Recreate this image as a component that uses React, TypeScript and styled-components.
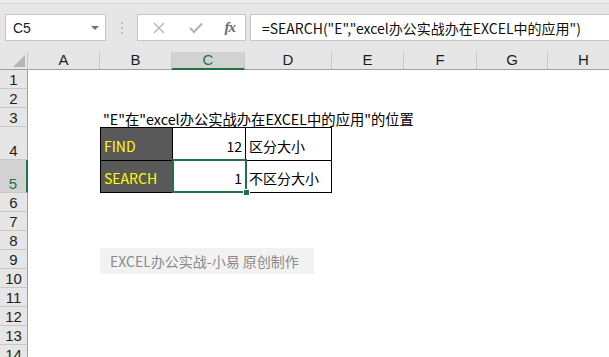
import React from 'react';
import styled, { createGlobalStyle, css } from 'styled-components';

const GlobalStyle = createGlobalStyle`
  html, body {
    margin: 0;
    padding: 0;
    background: #ffffff;
  }
  body {
    font-family: "Noto Sans CJK SC", "Noto Sans", sans-serif;
  }
`;

const COLS = [
  { name: 'A', width: 72 },
  { name: 'B', width: 72 },
  { name: 'C', width: 73 },
  { name: 'D', width: 87 },
  { name: 'E', width: 72 },
  { name: 'F', width: 73 },
  { name: 'G', width: 71 },
  { name: 'H', width: 72 },
];

const ROW_HEIGHTS = [19, 19, 19, 33, 33, 19, 19, 19, 19, 19, 19, 19, 19, 19];

type CellData = {
  text: string;
  align?: 'left' | 'right';
  fill?: boolean;
  boxed?: boolean;
  selected?: boolean;
  overflow?: boolean;
};

// row number -> column index (0 = A) -> cell
const CELLS: Record<number, Record<number, CellData>> = {
  3: {
    1: { text: '"E"在"excel办公实战办在EXCEL中的应用"的位置', overflow: true },
  },
  4: {
    1: { text: 'FIND', fill: true, boxed: true },
    2: { text: '12', align: 'right', boxed: true },
    3: { text: '区分大小', boxed: true },
  },
  5: {
    1: { text: 'SEARCH', fill: true, boxed: true },
    2: { text: '1', align: 'right', boxed: true, selected: true },
    3: { text: '不区分大小', boxed: true },
  },
};

const SELECTED_COL = 2;
const SELECTED_ROW = 5;

export default function App() {
  return (
    <>
      <GlobalStyle />
      <Window>
        <TopStrip />
        <FormulaBar>
          <NameBox>
            <span>C5</span>
            <DropArrow />
          </NameBox>
          <Grip>
            <i />
            <i />
            <i />
          </Grip>
          <FuncButtons>
            <FuncIcon>
              <svg width="12" height="12" viewBox="0 0 12 12">
                <path d="M1 1 L11 11 M11 1 L1 11" stroke="#b3b3b3" strokeWidth="1.3" fill="none" />
              </svg>
            </FuncIcon>
            <FuncIcon>
              <svg width="14" height="12" viewBox="0 0 14 12">
                <path d="M1 6 L5 10 L13 1.5" stroke="#b3b3b3" strokeWidth="2" fill="none" />
              </svg>
            </FuncIcon>
            <FxLabel>fx</FxLabel>
          </FuncButtons>
          <FormulaInput>=SEARCH("E","excel办公实战办在EXCEL中的应用")</FormulaInput>
        </FormulaBar>

        <Sheet>
          <CornerCell>
            <svg width="12" height="12" viewBox="0 0 12 12">
              <polygon points="12,0 12,12 0,12" fill="#b5b5b5" />
            </svg>
          </CornerCell>
          {COLS.map((c, i) => (
            <ColHeader key={c.name} $active={i === SELECTED_COL}>
              {c.name}
            </ColHeader>
          ))}

          {ROW_HEIGHTS.map((h, r) => {
            const rowNo = r + 1;
            const rowCells = CELLS[rowNo] || {};
            return (
              <React.Fragment key={rowNo}>
                <RowHeader $active={rowNo === SELECTED_ROW}>{rowNo}</RowHeader>
                {COLS.map((c, ci) => {
                  const cell = rowCells[ci];
                  if (!cell) return <Cell key={c.name} />;
                  const lastCol = !rowCells[ci + 1]?.boxed;
                  const lastRow = !CELLS[rowNo + 1]?.[ci]?.boxed;
                  return (
                    <Cell
                      key={c.name}
                      $align={cell.align || 'left'}
                      $fill={cell.fill}
                      $boxed={cell.boxed}
                      $lastCol={lastCol}
                      $lastRow={lastRow}
                      $selected={cell.selected}
                      $overflow={cell.overflow}
                    >
                      {cell.text}
                    </Cell>
                  );
                })}
              </React.Fragment>
            );
          })}

          <Watermark>EXCEL办公实战-小易 原创制作</Watermark>
        </Sheet>
      </Window>
    </>
  );
}

const Window = styled.div`
  width: 609px;
  height: 357px;
  overflow: hidden;
  background: #ffffff;
`;

const TopStrip = styled.div`
  height: 3px;
  background: #ececec;
  border-bottom: 1px solid #d6d6d6;
`;

const FormulaBar = styled.div`
  display: flex;
  align-items: center;
  height: 48px;
  box-sizing: border-box;
  padding: 10px 0 11px 5px;
  background: #e6e6e6;
`;

const boxBase = css`
  height: 27px;
  box-sizing: border-box;
  background: #ffffff;
  border: 1px solid #c6c6c6;
  display: flex;
  align-items: center;
`;

const NameBox = styled.div`
  ${boxBase};
  width: 101px;
  padding: 0 6px 0 7px;
  justify-content: space-between;
  font-family: "Liberation Sans", Arial, sans-serif;
  font-size: 14px;
  color: #222222;
`;

const DropArrow = styled.span`
  width: 0;
  height: 0;
  border-left: 4px solid transparent;
  border-right: 4px solid transparent;
  border-top: 4px solid #707070;
  margin-top: 1px;
`;

const Grip = styled.div`
  width: 31px;
  display: flex;
  flex-direction: column;
  align-items: center;
  gap: 3px;

  i {
    display: block;
    width: 2px;
    height: 2px;
    background: #bdbdbd;
  }
`;

const FuncButtons = styled.div`
  ${boxBase};
  width: 109px;
  padding: 0 10px 0 13px;
  justify-content: space-between;
`;

const FuncIcon = styled.span`
  display: flex;
  align-items: center;
  width: 16px;
  justify-content: center;
`;

const FxLabel = styled.span`
  font-family: "Liberation Serif", "Times New Roman", serif;
  font-style: italic;
  font-weight: bold;
  font-size: 15px;
  color: #6a6a6a;
  letter-spacing: -1px;
`;

const FormulaInput = styled.div`
  ${boxBase};
  flex: 1;
  margin-left: 4px;
  margin-right: -2px;
  padding-left: 11px;
  font-size: 14px;
  color: #111111;
  white-space: nowrap;
`;

const Sheet = styled.div`
  position: relative;
  display: grid;
  grid-template-columns: 28px ${COLS.map((c) => `${c.width}px`).join(' ')};
  grid-template-rows: 18px ${ROW_HEIGHTS.map((h) => `${h}px`).join(' ')};
  font-size: 14px;
`;

const headerText = css`
  box-sizing: border-box;
  background: #e6e6e6;
  font-family: "Liberation Sans", Arial, sans-serif;
  font-size: 15px;
  color: #1e1e1e;
  display: flex;
  justify-content: center;
  align-items: flex-end;
  line-height: 1;
`;

const CornerCell = styled.div`
  ${headerText};
  border-right: 1px solid #c8c8c8;
  border-bottom: 1px solid #9f9f9f;
  justify-content: flex-end;
  padding: 0 2px 2px 0;
`;

const ColHeader = styled.div<{ $active?: boolean }>`
  ${headerText};
  border-right: 1px solid #c8c8c8;
  border-bottom: 1px solid #9f9f9f;
  padding-bottom: 2px;
  ${(p) =>
    p.$active &&
    css`
      background: #d2d2d2;
      color: #217346;
      border-bottom: 2px solid #217346;
      padding-bottom: 1px;
    `}
`;

const RowHeader = styled.div<{ $active?: boolean }>`
  ${headerText};
  border-right: 1px solid #9f9f9f;
  border-bottom: 1px solid #c8c8c8;
  padding-bottom: 1px;
  ${(p) =>
    p.$active &&
    css`
      background: #d2d2d2;
      color: #217346;
      border-right: 2px solid #217346;
    `}
`;

const Cell = styled.div<{
  $align?: 'left' | 'right';
  $fill?: boolean;
  $boxed?: boolean;
  $lastCol?: boolean;
  $lastRow?: boolean;
  $selected?: boolean;
  $overflow?: boolean;
}>`
  position: relative;
  box-sizing: border-box;
  display: flex;
  align-items: ${(p) => (p.$overflow ? 'flex-end' : 'center')};
  justify-content: ${(p) => (p.$align === 'right' ? 'flex-end' : 'flex-start')};
  padding: ${(p) => (p.$overflow ? '0 0 1px 3px' : '3px 3px 0 3px')};
  font-family: "Noto Sans CJK SC", "Noto Sans", sans-serif;
  font-size: ${(p) => (p.$overflow ? '14.3px' : '14px')};
  line-height: 1;
  color: ${(p) => (p.$fill ? '#ffff00' : '#000000')};
  background: ${(p) => (p.$fill ? '#595959' : 'transparent')};
  white-space: nowrap;
  overflow: visible;
  ${(p) =>
    p.$boxed &&
    css`
      border-left: 1px solid #000000;
      border-top: 1px solid #000000;
      ${p.$lastCol ? 'border-right: 1px solid #000000;' : ''}
      ${p.$lastRow ? 'border-bottom: 1px solid #000000;' : ''}
    `}
  ${(p) =>
    p.$selected &&
    css`
      z-index: 2;
      &::after {
        content: '';
        position: absolute;
        left: -1px;
        top: -2px;
        right: -2px;
        bottom: -1px;
        border: 2px solid #217346;
        pointer-events: none;
      }
      &::before {
        content: '';
        position: absolute;
        right: -5px;
        bottom: -4px;
        width: 5px;
        height: 5px;
        background: #217346;
        border: 1px solid #ffffff;
        z-index: 1;
      }
    `}
`;

const Watermark = styled.div`
  position: absolute;
  left: 100px;
  top: 196px;
  width: 214px;
  height: 26px;
  box-sizing: border-box;
  padding-left: 10px;
  display: flex;
  align-items: center;
  background: #f2f2f2;
  color: #8a8a8a;
  font-size: 14px;
  white-space: nowrap;
`;
